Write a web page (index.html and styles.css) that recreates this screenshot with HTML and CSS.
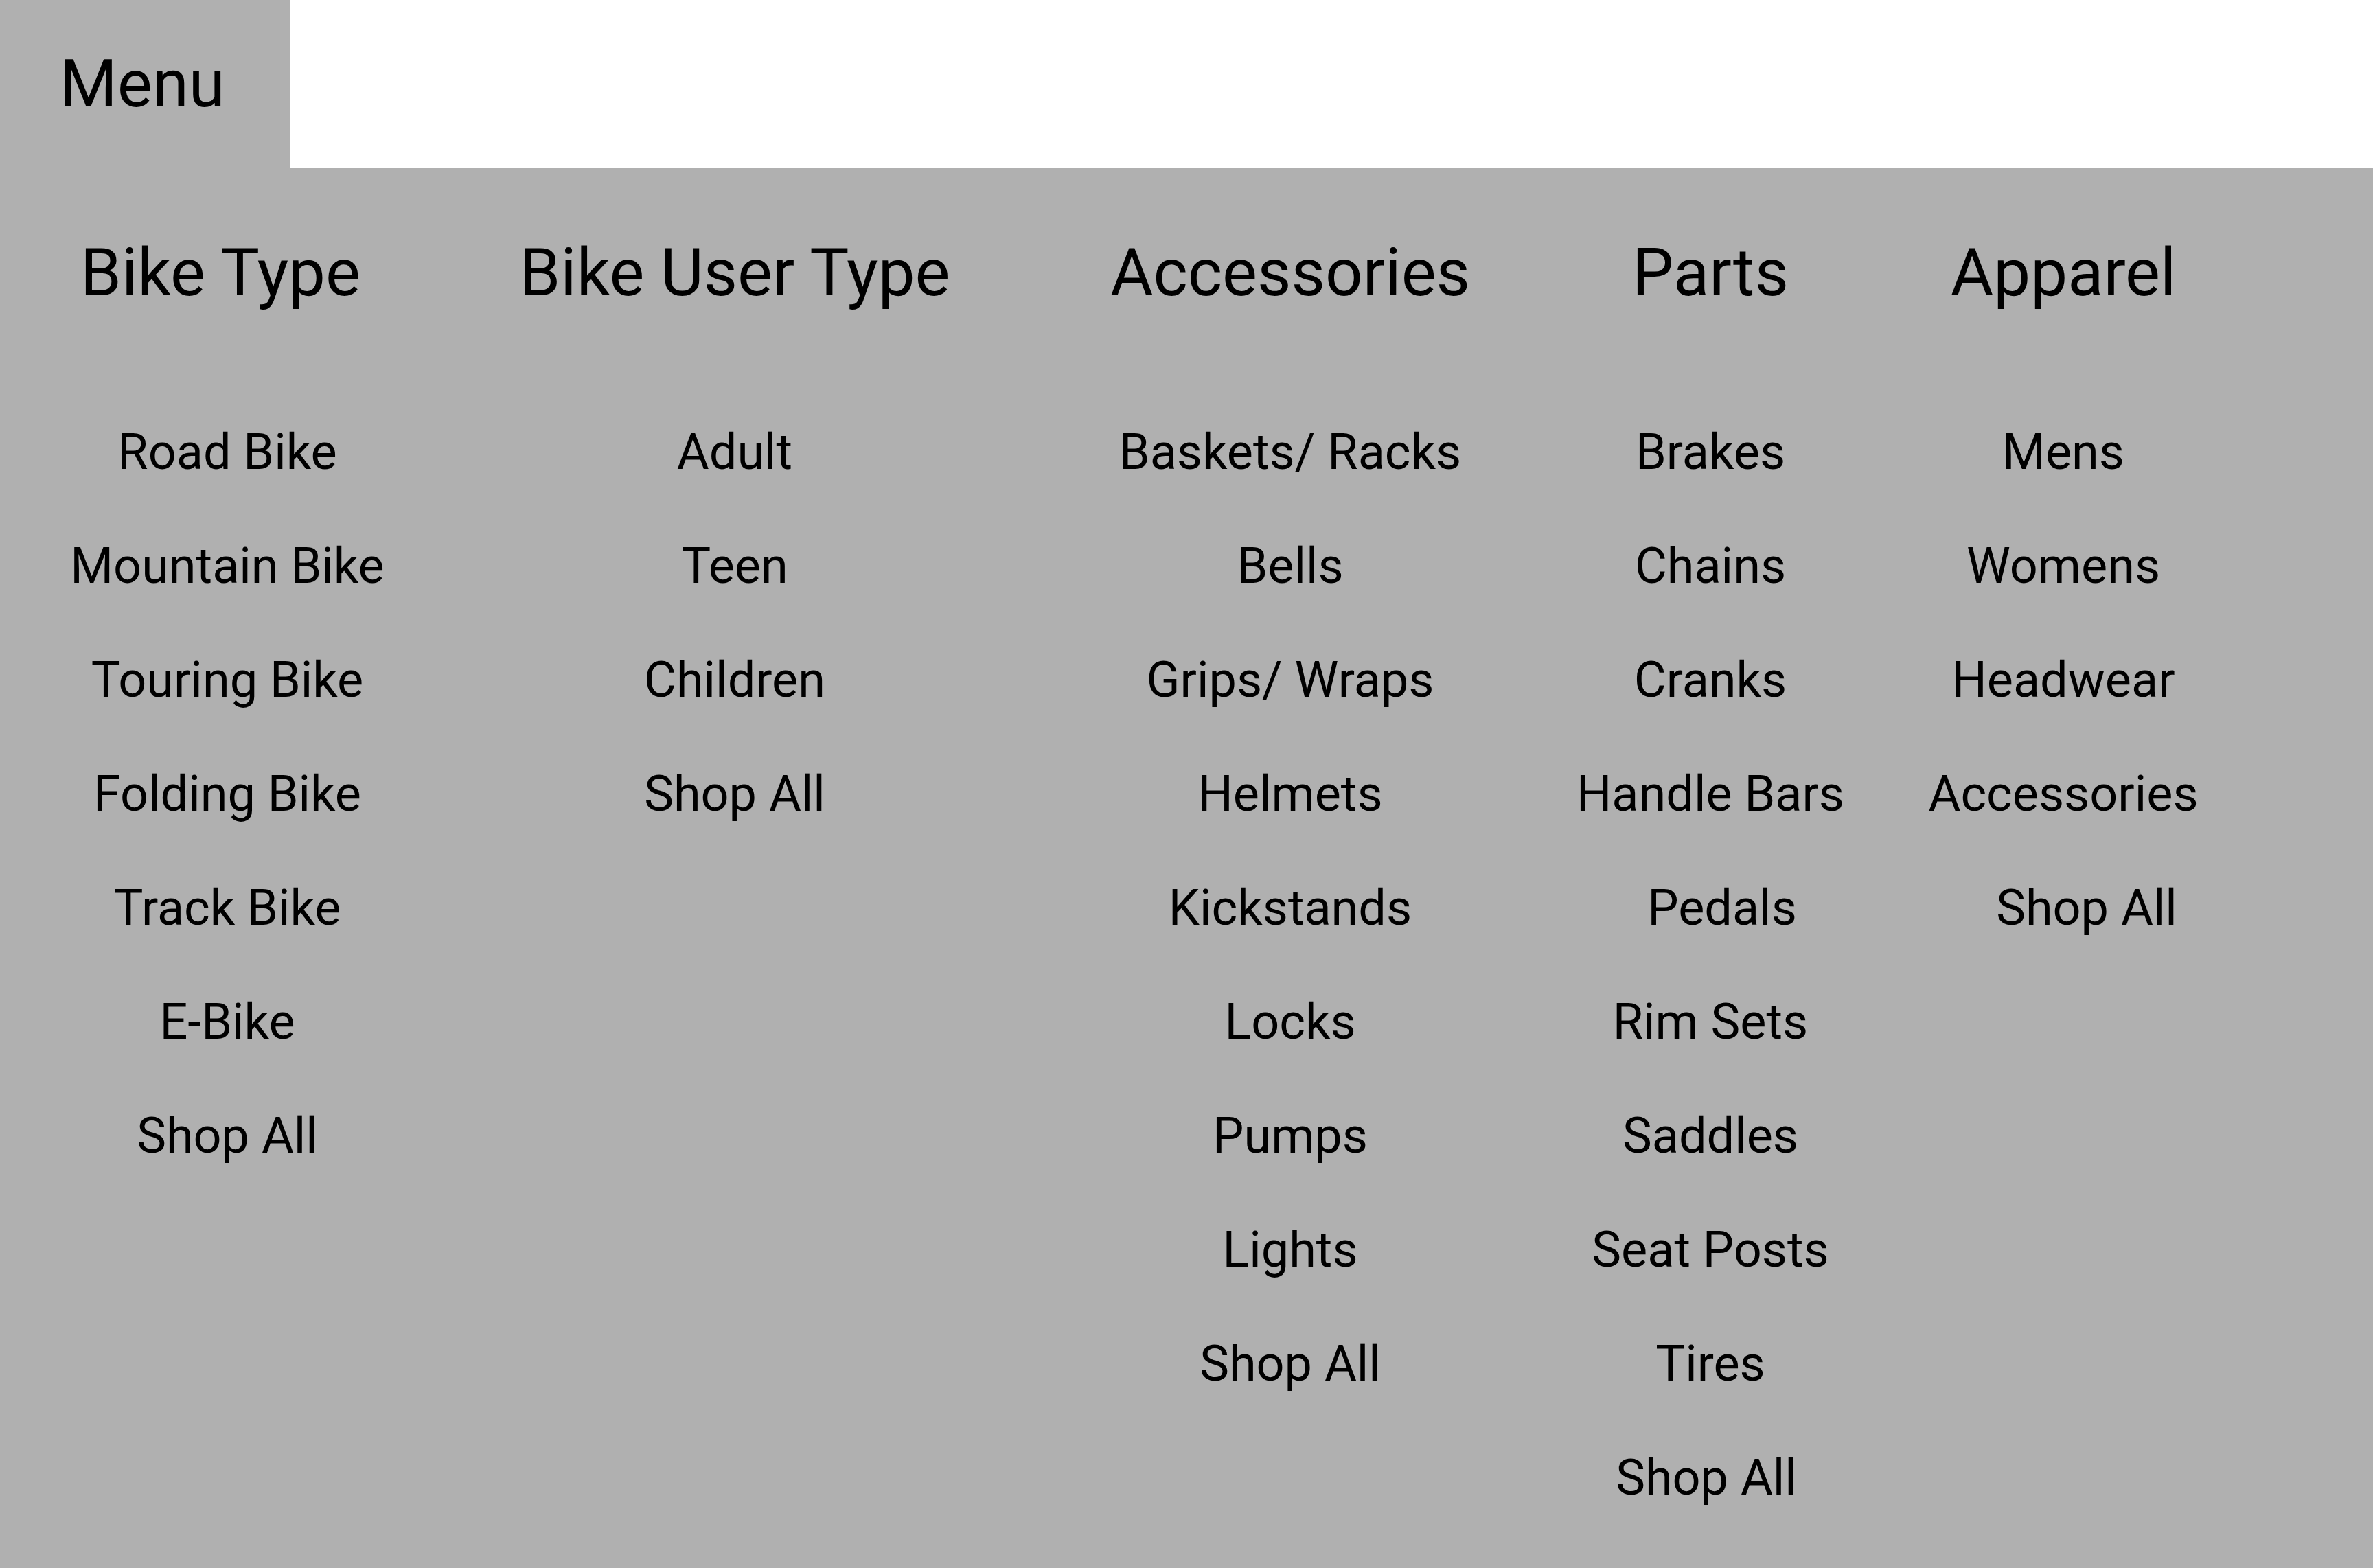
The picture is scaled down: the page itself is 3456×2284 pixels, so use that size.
FILE: index.html
```html
<!DOCTYPE html>
<html lang="en">
<head>
<meta charset="utf-8">
<title>Menu</title>
<link rel="stylesheet" href="styles.css">
</head>
<body>
<header class="topbar">
  <div class="menu-tab">Menu</div>
</header>
<nav class="mega">
  <section class="col">
    <h2 class="col-title col-title--left">Bike Type</h2>
    <ul class="links">
      <li>Road Bike</li>
      <li>Mountain Bike</li>
      <li>Touring Bike</li>
      <li>Folding Bike</li>
      <li>Track Bike</li>
      <li>E-Bike</li>
      <li>Shop All</li>
    </ul>
  </section>
  <section class="col">
    <h2 class="col-title">Bike User Type</h2>
    <ul class="links">
      <li>Adult</li>
      <li>Teen</li>
      <li>Children</li>
      <li>Shop All</li>
    </ul>
  </section>
  <section class="col">
    <h2 class="col-title">Accessories</h2>
    <ul class="links">
      <li>Baskets/ Racks</li>
      <li>Bells</li>
      <li>Grips/ Wraps</li>
      <li>Helmets</li>
      <li>Kickstands</li>
      <li>Locks</li>
      <li>Pumps</li>
      <li>Lights</li>
      <li>Shop All</li>
    </ul>
  </section>
  <section class="col">
    <h2 class="col-title">Parts</h2>
    <ul class="links">
      <li>Brakes</li>
      <li>Chains</li>
      <li>Cranks</li>
      <li>Handle Bars</li>
      <li class="nudge-right-sm">Pedals</li>
      <li>Rim Sets</li>
      <li>Saddles</li>
      <li>Seat Posts</li>
      <li>Tires</li>
      <li class="nudge-left-xs">Shop All</li>
    </ul>
  </section>
  <section class="col">
    <h2 class="col-title">Apparel</h2>
    <ul class="links">
      <li>Mens</li>
      <li>Womens</li>
      <li>Headwear</li>
      <li>Accessories</li>
      <li class="nudge-right-md">Shop All</li>
    </ul>
  </section>
</nav>
</body>
</html>
```
FILE: styles.css
```css
html, body {
  margin: 0;
  padding: 0;
  background: #ffffff;
}

body {
  font-family: Roboto, "Liberation Sans", sans-serif;
  color: #000000;
}

.topbar {
  display: flex;
  height: 244px;
  background: #ffffff;
}

.menu-tab {
  width: 422px;
  box-sizing: border-box;
  padding-left: 87px;
  background: #b0b0b0;
  font-size: 96px;
  display: flex;
  align-items: center;
}

.mega {
  display: grid;
  grid-template-columns: 662px 816px 802px 422px 606px;
  align-items: start;
  background: #b0b0b0;
  min-height: 2040px;
  box-sizing: border-box;
  padding-top: 97px;
}

.col {
  text-align: center;
}

.col-title {
  margin: 0 0 123px;
  font-size: 96px;
  font-weight: 400;
  line-height: normal;
  white-space: nowrap;
}

.col-title--left {
  padding-right: 20px;
}

.links {
  list-style: none;
  margin: 0;
  padding: 0;
}

.links li {
  font-size: 72px;
  line-height: 166px;
  white-space: nowrap;
}

.nudge-right-sm {
  padding-left: 34px;
}

.nudge-right-md {
  padding-left: 68px;
}

.nudge-left-xs {
  padding-right: 12px;
}
```
